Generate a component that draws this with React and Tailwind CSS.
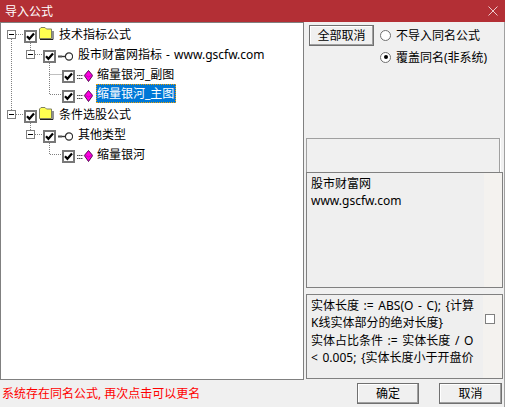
import React from "react";

const Check = () => (
  <span className="flex h-[13px] w-[13px] shrink-0 items-center justify-center border-2 border-[#787878] bg-white">
    <svg width="9" height="9" viewBox="0 0 9 9"><path d="M1 4.2 L3.4 6.8 L8 1.6" fill="none" stroke="#000" strokeWidth="2.2" /></svg>
  </span>
);

const Minus = () => (
  <span className="flex h-[9px] w-[9px] shrink-0 items-center justify-center border border-[#808080] bg-white">
    <span className="h-px w-[5px] bg-black" />
  </span>
);

const Folder = () => (
  <svg width="16" height="14" viewBox="0 0 16 14" className="shrink-0">
    <path d="M1.5 12.5 V3 L3 1.5 H7 L8.5 3 H13.5 V12.5 Z" fill="#ffff50" stroke="#808060" strokeWidth="1" />
    <path d="M2 13.5 H15 V5" fill="none" stroke="#202020" strokeWidth="1" />
  </svg>
);

const Key = () => (
  <svg width="15" height="9" viewBox="0 0 15 9" className="shrink-0">
    <path d="M0 4.5 H7.5" stroke="#303030" strokeWidth="1.4" />
    <path d="M1 3 V6 M3 3 V6" stroke="#707070" strokeWidth="1" />
    <circle cx="11" cy="4.5" r="3.6" fill="#fff" stroke="#303030" strokeWidth="1.2" />
  </svg>
);

const Gem = () => (
  <svg width="16" height="13" viewBox="0 0 16 13" className="shrink-0">
    <path d="M0 5.5 H6 M0 8.5 H6" stroke="#505050" strokeWidth="1" strokeDasharray="1.5 0.5" />
    <path d="M11.5 0.5 L15.7 5.5 L11.5 11.5 L7.3 5.5 Z" fill="#ff00e0" stroke="#400040" strokeWidth="0.9" />
    <path d="M8 5 L11.5 7 L15 5" fill="none" stroke="#b000b0" strokeWidth="0.7" />
  </svg>
);

const Row = ({ pad, box, icon, selected, children, textGap }) => (
  <div className={`flex h-5 items-start pt-[7px] ${pad}`}>
    {box && <span className="mr-2"><Minus /></span>}
    <Check />
    <span className="flex h-[13px] items-center">{icon}</span>
    <span
      className={
        selected
          ? "-mt-[6px] ml-[3px] flex h-[19px] items-center border border-dotted border-[#f0a000] bg-[#0078d7] pr-px text-white"
          : `-mt-[4px] leading-[17px] text-black [word-spacing:1px] ${textGap}`
      }
    >
      {children}
    </span>
  </div>
);

const Button = ({ className, children }) => (
  <button className={`flex items-center justify-center border border-[#707070] bg-[#f0f0f0] text-black shadow-[inset_-1px_-1px_0_#a0a0a0,inset_1px_1px_0_#ffffff] ${className}`}>
    {children}
  </button>
);

export default function App() {
  return (
    <div
      className="flex h-[407px] w-[505px] flex-col overflow-hidden bg-[#f0f0f0] text-[12px] leading-[17px] text-black"
      style={{ fontFamily: '"Noto Sans", "Noto Sans CJK SC", sans-serif' }}
    >
      <div className="flex h-[22px] shrink-0 items-center justify-between bg-[#b32f35] pl-[5px] pr-[7px] text-white">
        <span>导入公式</span>
        <svg width="10" height="10" viewBox="0 0 10 10"><path d="M0.5 0.5 L9.5 9.5 M9.5 0.5 L0.5 9.5" stroke="#ffffff" strokeOpacity="0.75" /></svg>
      </div>

      <div className="flex min-h-0 flex-1 flex-col border-r border-[#a0a0a0]">
        <div className="flex h-[358px] shrink-0">
          <div className="relative h-full w-[304px] shrink-0 border border-[#808080] bg-white">
            <svg className="absolute left-[-1px] top-[-23px]" width="304" height="200" fill="none" stroke="#808080" strokeWidth="1" strokeDasharray="1 1">
              <path d="M11.5 39 V110 M16 34.5 H24 M30.5 43 V50 M35 54.5 H43 M49.5 63 V94.5 H62 M49.5 74.5 H62 M16 114.5 H24 M30.5 123 V130 M35 134.5 H43 M49.5 143 V154.5 H62" />
            </svg>
            <div className="relative pl-px">
              <Row pad="pl-[5px]" box textGap="ml-[5px]" icon={<span className="-mt-[7px] ml-px"><Folder /></span>}>技术指标公式</Row>
              <Row pad="pl-[24px]" box textGap="ml-[5px]" icon={<span className="ml-[2px]"><Key /></span>}>股市财富网指标 - www.gscfw.com</Row>
              <Row pad="pl-[60px]" textGap="ml-[4px]" icon={<span className="ml-[2px]"><Gem /></span>}>缩量银河_副图</Row>
              <Row pad="pl-[60px]" icon={<span className="ml-[2px]"><Gem /></span>} selected>缩量银河_主图</Row>
              <Row pad="pl-[5px]" box textGap="ml-[5px]" icon={<span className="-mt-[7px] ml-px"><Folder /></span>}>条件选股公式</Row>
              <Row pad="pl-[24px]" box textGap="ml-[5px]" icon={<span className="ml-[2px]"><Key /></span>}>其他类型</Row>
              <Row pad="pl-[60px]" textGap="ml-[4px]" icon={<span className="ml-[2px]"><Gem /></span>}>缩量银河</Row>
            </div>
          </div>

          <div className="flex min-w-0 flex-1 flex-col pl-[2px]">
            <div className="flex h-[116px] shrink-0 pl-[3px] pt-[3px]">
              <Button className="h-[21px] w-[65px] shrink-0">全部取消</Button>
              <div className="-mt-px ml-[6px] flex flex-col">
                <label className="flex h-[22px] items-center">
                  <span className="h-[11px] w-[11px] rounded-full border border-[#707070] bg-white" />
                  <span className="ml-[5px]">不导入同名公式</span>
                </label>
                <label className="flex h-[22px] items-center">
                  <span className="flex h-[11px] w-[11px] items-center justify-center rounded-full border border-[#707070] bg-white">
                    <span className="h-[4px] w-[4px] rounded-full bg-black" />
                  </span>
                  <span className="ml-[5px]">覆盖同名(非系统)</span>
                </label>
              </div>
            </div>
            <div className="mr-[4px] h-[34px] shrink-0 border-x border-t border-[#a0a0a0] shadow-[1px_0_0_#ffffff]" />
            <div className="mr-px flex h-[116px] shrink-0 border border-[#808080] bg-[#f4f2ef]">
              <div className="w-[177px] bg-[#efefef] px-1 pt-[2px] leading-[17px]">
                <div>股市财富网</div>
                <div>www.gscfw.com</div>
              </div>
            </div>
            <div className="mr-px mt-[6px] flex h-[85px] shrink-0 border border-[#808080] bg-[#f4f2ef]">
              <div className="w-[176px] shrink-0 bg-[#efefef] pl-1 pt-[2px] leading-[17.4px] whitespace-nowrap [word-spacing:1.5px]">
                <div>实体长度 := ABS(O - C); {"{"}计算</div>
                <div>K线实体部分的绝对长度{"}"}</div>
                <div>实体占比条件 := 实体长度 / O</div>
                <div>&lt; 0.005; {"{"}实体长度小于开盘价</div>
              </div>
              <span className="ml-[2px] mt-[19px] h-[10px] w-[10px] border border-[#808080] bg-white" />
            </div>
          </div>
        </div>

        <div className="flex flex-1 items-center justify-between pl-[2px] pr-[2px]">
          <span className="text-[#ff0000]">系统存在同名公式, 再次点击可以更名</span>
          <div className="flex gap-5">
            <Button className="h-[21px] w-[62px]">确定</Button>
            <Button className="h-[21px] w-[63px]">取消</Button>
          </div>
        </div>
      </div>
    </div>
  );
}
